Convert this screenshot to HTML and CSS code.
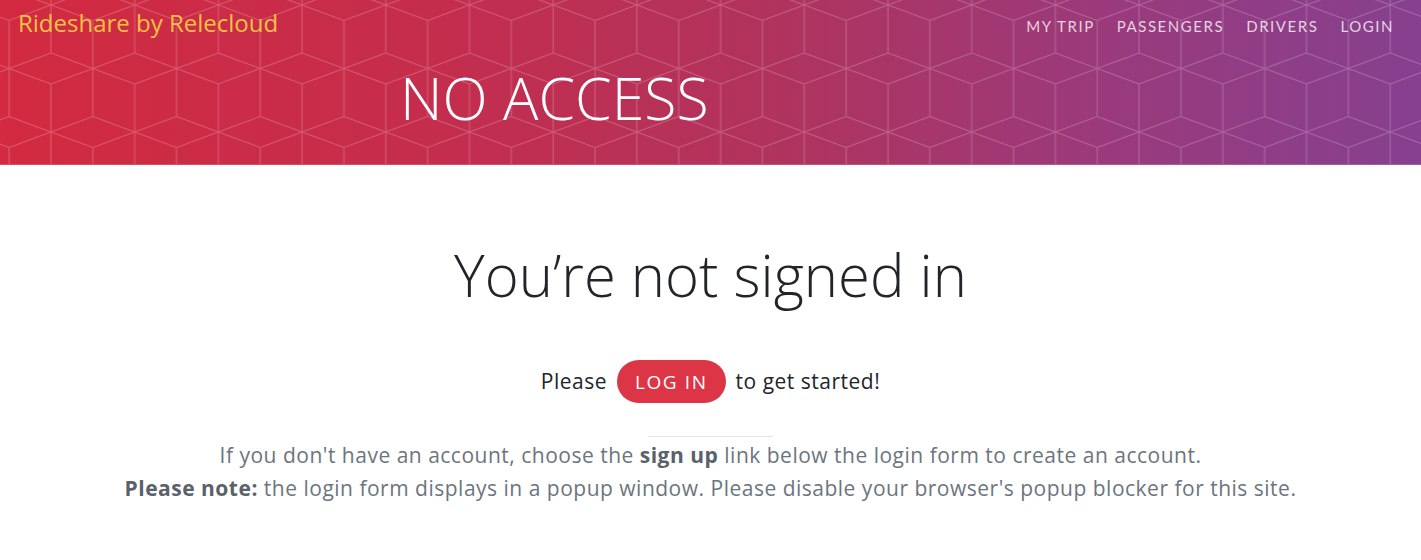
FILE: index.html
```html
<!DOCTYPE html>
<html lang="en">
<head>
<meta charset="utf-8">
<title>No Access - Rideshare by Relecloud</title>
<link rel="stylesheet" href="styles.css">
</head>
<body>
<header class="hero">
  <svg class="hero-pattern" aria-hidden="true" width="100%" height="100%">
    <defs>
      <pattern id="cubes" patternUnits="userSpaceOnUse" x="31" y="-15" width="83.7" height="127">
        <path d="M61.85,-91.5V4.5 M20,-28V68 M-21.85,4.5L61.85,35.5 M-21.85,35.5L61.85,4.5 M61.85,4.5L145.55,35.5 M61.85,35.5L145.55,4.5 M-63.7,68L20,99 M-63.7,99L20,68 M61.85,35.5V131.5 M20,68L103.7,99 M20,99L103.7,68 M20,99V195" fill="none" stroke="#ffffff" stroke-opacity="0.2" stroke-width="1.2"/>
      </pattern>
    </defs>
    <rect width="100%" height="100%" fill="url(#cubes)"/>
  </svg>
  <nav class="topbar">
    <a class="brand" href="#">Rideshare by Relecloud</a>
    <ul class="nav-links">
      <li><a href="#">My Trip</a></li>
      <li><a href="#">Passengers</a></li>
      <li><a href="#">Drivers</a></li>
      <li><a href="#">Login</a></li>
    </ul>
  </nav>
  <h1 class="hero-title">NO ACCESS</h1>
</header>
<main class="content">
  <h2 class="signin-title">You’re not signed in</h2>
  <p class="cta">Please <a class="btn-login" href="#">Log in</a> to get started!</p>
  <hr class="divider">
  <p class="note">If you don't have an account, choose the <strong>sign up</strong> link below the login form to create an account.<br><strong>Please note:</strong> the login form displays in a popup window. Please disable your browser's popup blocker for this site.</p>
</main>
</body>
</html>
```

FILE: styles.css
```css
* { box-sizing: border-box; }

body {
  margin: 0;
  background: #ffffff;
  font-family: "Open Sans", "Noto Sans", sans-serif;
  color: #212529;
}

a { text-decoration: none; }

.hero {
  position: relative;
  height: 165px;
  background: linear-gradient(90deg, #d22a40 0%, #c52d4c 30%, #b0335e 55%, #9a3a7c 78%, #86408f 100%);
  border-bottom: 1px solid rgba(255, 255, 255, 0.18);
  overflow: hidden;
}

.hero-pattern {
  position: absolute;
  inset: 0;
  display: block;
}

.topbar {
  position: relative;
  display: flex;
  justify-content: space-between;
  align-items: flex-start;
  padding: 6px 27px 0 18px;
}

.brand {
  font-family: "Open Sans", sans-serif;
  font-size: 24px;
  font-weight: 400;
  line-height: 34px;
  color: #f4c145;
}

.nav-links {
  display: flex;
  gap: 22px;
  margin: 0;
  padding: 9px 0 0;
  list-style: none;
}

.nav-links a {
  font-family: Lato, sans-serif;
  font-size: 15px;
  letter-spacing: 1.55px;
  text-transform: uppercase;
  color: rgba(255, 255, 255, 0.78);
}

.hero-title {
  position: relative;
  margin: 28px 0 0 400px;
  font-family: "Open Sans", sans-serif;
  font-weight: 300;
  font-size: 59px;
  line-height: 1;
  color: #ffffff;
}

.content {
  text-align: center;
  padding-top: 75px;
}

.signin-title {
  margin: 0;
  font-family: "Open Sans", sans-serif;
  font-weight: 300;
  font-size: 58px;
  line-height: 1.2;
  color: #212529;
}

.cta {
  margin: 50px 0 0;
  font-size: 21px;
  letter-spacing: 0.5px;
  color: #212529;
}

.btn-login {
  display: inline-block;
  margin: 0 4px;
  padding: 9px 18px 8px;
  border-radius: 22px;
  background: #dc3545;
  color: #ffffff;
  font-size: 19px;
  letter-spacing: 1.6px;
  text-transform: uppercase;
  line-height: 26px;
}

.divider {
  width: 125px;
  margin: 33px auto 0;
  border: 0;
  border-top: 1px solid #e3e3e3;
}

.note {
  margin: 2px 0 0;
  font-size: 21px;
  letter-spacing: 0.5px;
  line-height: 33px;
  color: #6c757d;
}

.note strong {
  font-weight: 700;
  color: #5a6168;
}
```
